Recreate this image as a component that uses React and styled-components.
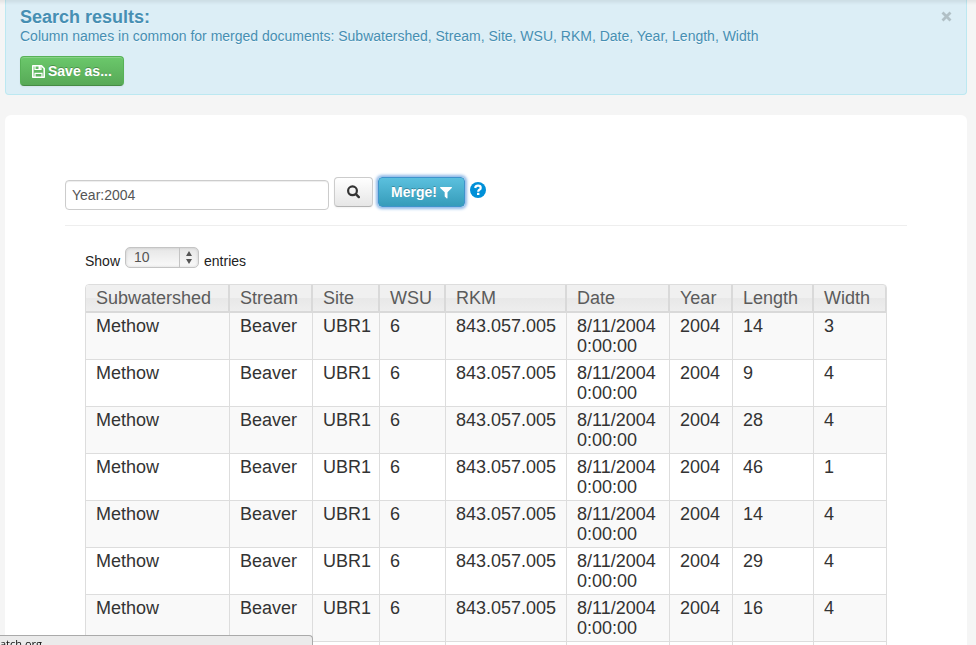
import React from "react";
import styled, { createGlobalStyle, css } from "styled-components";

const GlobalStyle = createGlobalStyle`
  *, *::before, *::after { box-sizing: border-box; }
  body {
    margin: 0;
    background: #f5f5f5;
    color: #333;
    font: 14px/20px "Liberation Sans", Arial, sans-serif;
  }
`;

const Page = styled.div`
  height: 100vh;
  overflow: hidden;
  padding: 0 9px 0 5px;
`;

const TopShade = styled.div`
  position: fixed;
  inset: 0 0 auto;
  height: 5px;
  background: linear-gradient(rgba(0, 0, 0, 0.07), rgba(0, 0, 0, 0));
`;

const Alert = styled.section`
  display: flex;
  align-items: flex-start;
  justify-content: space-between;
  padding: 7px 14px 8px;
  border: 1px solid #bce8f1;
  border-top: 0;
  border-radius: 0 0 4px 4px;
  background: #dceef6;
  color: #468fb3;
  text-shadow: 0 1px 0 rgba(255, 255, 255, 0.5);
`;

const AlertTitle = styled.h4`
  margin: 0;
  font-size: 18px;
  line-height: 20px;
`;

const AlertText = styled.p`
  margin: 0 0 11px;
  line-height: 18px;
`;

const CloseButton = styled.button`
  display: flex;
  margin-top: 4px;
  padding: 0;
  border: 0;
  background: none;
  color: #b1c0c6;
`;

const tones = {
  plain: css`
    padding: 0 12px;
    border-color: #ccc #ccc #b3b3b3;
    background: linear-gradient(#fff, #e6e6e6);
    color: #333;
  `,
  success: css`
    padding: 0 11px;
    border-color: #57b257 #57b257 #458b45;
    background: linear-gradient(#6bc86b, #57a957);
    color: #fff;
    text-shadow: 0 -1px 0 rgba(0, 0, 0, 0.25);
  `,
  info: css`
    padding: 0 12px;
    border-color: #3f94cc;
    background: linear-gradient(#5bc0de, #369cba);
    color: #fff;
    text-shadow: 0 -1px 0 rgba(0, 0, 0, 0.25);
  `,
};

const Button = styled.button`
  display: inline-flex;
  align-items: center;
  gap: 3px;
  height: 30px;
  border: 1px solid;
  border-radius: 4px;
  font: bold 14px/20px "Liberation Sans", Arial, sans-serif;
  box-shadow: inset 0 1px 0 rgba(255, 255, 255, 0.2), 0 1px 2px rgba(0, 0, 0, 0.05);
  ${({ $tone }) => tones[$tone]}
  ${({ $focused }) => $focused && css`box-shadow: 0 0 3px 2px #8fb9e8;`}
`;

const Panel = styled.main`
  margin-top: 20px;
  padding: 60px;
  border-radius: 6px;
  background: #fff;
`;

const SearchBar = styled.form`
  display: flex;
  align-items: flex-start;
  gap: 5px;
  padding: 2px 0 15px;
  border-bottom: 1px solid #eee;
`;

const SearchInput = styled.input`
  width: 264px;
  height: 30px;
  margin-top: 3px;
  padding: 4px 6px;
  border: 1px solid #ccc;
  border-radius: 4px;
  box-shadow: inset 0 1px 1px rgba(0, 0, 0, 0.075);
  color: #555;
  font: 14px/20px "Liberation Sans", Arial, sans-serif;
`;

const HelpLink = styled.a`
  display: flex;
  padding-top: 5px;
  color: #0090d8;
`;

const Results = styled.section`
  margin: 20px 20px 0;
`;

const LengthLabel = styled.label`
  display: flex;
  gap: 5px;
  height: 38px;
  padding-top: 5px;
  color: #222;
`;

const SelectWrap = styled.span`
  display: grid;
  grid-template-columns: 1fr 19px;
  width: 74px;
  height: 21px;
  margin-top: -4px;
  border: 1px solid #c4c4c4;
  border-radius: 5px;
  background: linear-gradient(#e6e6e6, #fafafa);
  box-shadow: inset 0 0 3px rgba(0, 0, 0, 0.15);
  color: #555;
`;

const Select = styled.select`
  grid-area: 1 / 1 / 2 / 3;
  appearance: none;
  height: 18px;
  padding: 0 8px;
  border: 0;
  background: none;
  color: #555;
  font: 14px/18px "Liberation Sans", Arial, sans-serif;
`;

const Stepper = styled.span`
  grid-area: 1 / 2;
  display: flex;
  align-items: center;
  justify-content: center;
  border-left: 1px solid #c4c4c4;
  pointer-events: none;
`;

const Table = styled.table`
  width: 100%;
  table-layout: fixed;
  border: 1px solid #ddd;
  border-radius: 4px 4px 0 0;
  border-collapse: separate;
  border-spacing: 0;
  font-size: 18px;
  line-height: 20px;
`;

const Column = styled.col`
  width: ${({ $share }) => $share}px;
`;

const HeadCell = styled.th`
  height: 28px;
  padding: 3px 10px;
  border-right: 2px solid #d9d9d9;
  border-bottom: 2px solid #d9d9d9;
  background: linear-gradient(#f0f0f0 0 48%, #e8e8e8 52%, #eee);
  color: #5b5b5b;
  font-weight: normal;
  text-align: left;

  &:first-child { border-top-left-radius: 3px; }
  &:last-child { border-right-width: 1px; border-top-right-radius: 3px; }
`;

const Row = styled.tr`
  &:nth-child(odd) { background: #f9f9f9; }
`;

const Cell = styled.td`
  height: 47px;
  padding: 3px 9px 3px 10px;
  border-right: 1px solid #ddd;
  border-bottom: 1px solid #ddd;
  vertical-align: top;

  &:last-child { border-right: 0; }
`;

const StatusBar = styled.div`
  position: fixed;
  bottom: 0;
  left: 0;
  width: 313px;
  height: 10px;
  overflow: hidden;
  border: 1px solid #aaa;
  border-width: 1px 1px 0 0;
  border-radius: 0 4px 0 0;
  background: #ebebeb;
  color: #111;
  font: 11px/15px "Open Sans", sans-serif;
`;

const SaveIcon = () => (
  <svg width="13" height="13" viewBox="0 0 13 13" fill="none" stroke="currentColor" aria-hidden="true">
    <path d="M.8.8h8.700l2.700 2.700v8.700H.8Z" strokeWidth="1.600" strokeLinejoin="round" />
    <path d="M3 1v3.500h6V1M3 12V8.300h7V12" strokeWidth="1.200" />
    <path d="M6.500 1h2v3h-2Z" fill="currentColor" stroke="none" />
  </svg>
);

const SearchIcon = () => (
  <svg width="13" height="14" viewBox="0 0 13 14" fill="none" stroke="currentColor" aria-hidden="true">
    <circle cx="5.500" cy="5.800" r="4.400" strokeWidth="2.200" />
    <path d="m8.900 9.200 2.900 2.900" strokeWidth="2.400" strokeLinecap="round" />
  </svg>
);

const FilterIcon = () => (
  <svg width="12" height="13" viewBox="0 0 12 13" aria-hidden="true">
    <path fill="currentColor" d="M.5 1h11q.8.2.3.900L7.500 6.200v5.900q-.1.700-.7.400L4.700 10.500V6.200L.2 1.900Q-.2 1.200.5 1Z" />
  </svg>
);

const HelpIcon = () => (
  <svg width="16" height="16" viewBox="0 0 16 16" fill="none" aria-hidden="true">
    <circle cx="8" cy="8" r="8" fill="currentColor" />
    <path d="M5.200 6Q5.500 3.700 8.100 3.700t2.600 2.200q0 1.200-1.400 1.900Q8.200 8.400 8.200 9.700" stroke="#fff" strokeWidth="2.200" />
    <path d="M7 10.800h2.400v2.200H7Z" fill="#fff" />
  </svg>
);

const CloseIcon = () => (
  <svg width="11" height="11" viewBox="0 0 11 11" stroke="currentColor" aria-hidden="true">
    <path d="m1.500 1.500 8 8m0-8-8 8" strokeWidth="2.800" />
  </svg>
);

const StepperIcon = () => (
  <svg width="8" height="13" viewBox="0 0 8 13" fill="currentColor" aria-hidden="true">
    <path d="M4 0 7 5H1ZM1 8h6l-3 5Z" />
  </svg>
);

const columns = [
  ["Subwatershed", 144],
  ["Stream", 83],
  ["Site", 67],
  ["WSU", 66],
  ["RKM", 121],
  ["Date", 103],
  ["Year", 63],
  ["Length", 81],
  ["Width", 72],
];

const measurements = [[14, 3], [9, 4], [28, 4], [46, 1], [14, 4], [29, 4], [16, 4], [18, 4]];

export default function App() {
  return (
    <Page>
      <GlobalStyle />
      <Alert>
        <div>
          <AlertTitle>Search results:</AlertTitle>
          <AlertText>
            Column names in common for merged documents: Subwatershed, Stream, Site, WSU, RKM, Date, Year, Length, Width
          </AlertText>
          <Button type="button" $tone="success"><SaveIcon />Save as...</Button>
        </div>
        <CloseButton type="button" aria-label="Close"><CloseIcon /></CloseButton>
      </Alert>
      <Panel>
        <SearchBar>
          <SearchInput aria-label="Search" defaultValue="Year:2004" />
          <Button type="button" $tone="plain" aria-label="Search"><SearchIcon /></Button>
          <Button type="button" $tone="info" $focused>Merge!<FilterIcon /></Button>
          <HelpLink href="#help" aria-label="Help"><HelpIcon /></HelpLink>
        </SearchBar>
        <Results>
          <LengthLabel>
            Show
            <SelectWrap>
              <Select defaultValue="10">
                <option>10</option>
                <option>25</option>
                <option>50</option>
              </Select>
              <Stepper><StepperIcon /></Stepper>
            </SelectWrap>
            entries
          </LengthLabel>
          <Table>
            <colgroup>
              {columns.map(([name, share]) => <Column key={name} $share={share} />)}
            </colgroup>
            <thead>
              <tr>{columns.map(([name]) => <HeadCell key={name} scope="col">{name}</HeadCell>)}</tr>
            </thead>
            <tbody>
              {measurements.map(([length, width], index) => (
                <Row key={index}>
                  <Cell>Methow</Cell>
                  <Cell>Beaver</Cell>
                  <Cell>UBR1</Cell>
                  <Cell>6</Cell>
                  <Cell>843.057.005</Cell>
                  <Cell>8/11/2004 0:00:00</Cell>
                  <Cell>2004</Cell>
                  <Cell>{length}</Cell>
                  <Cell>{width}</Cell>
                </Row>
              ))}
            </tbody>
          </Table>
        </Results>
      </Panel>
      <TopShade />
      <StatusBar>atch.org</StatusBar>
    </Page>
  );
}
